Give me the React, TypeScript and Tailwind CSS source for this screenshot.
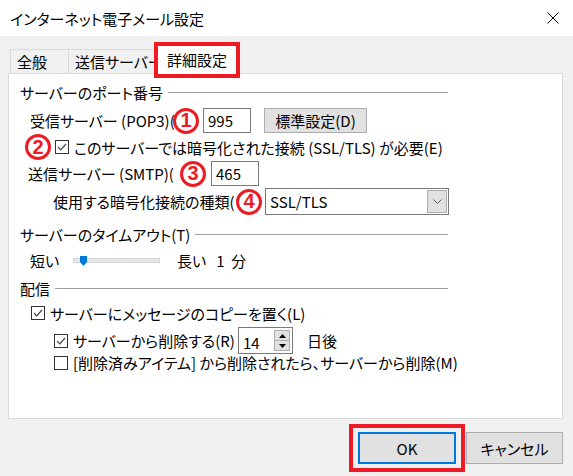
import React from "react";

const FONT = "font-['Noto_Sans_CJK_JP',sans-serif] [font-feature-settings:'palt']";

function Circled({ n }: { n: string }) {
  return (
    <span className="relative z-10 flex h-[26px] w-[26px] shrink-0 items-center justify-center rounded-full border-[3px] border-[#ed1c24] bg-white pb-[1px] font-['Liberation_Sans',sans-serif] text-[20px] font-bold leading-none text-[#ed1c24]">
      {n}
    </span>
  );
}

function Check({ checked }: { checked: boolean }) {
  return (
    <span className="flex h-[14px] w-[14px] shrink-0 items-center justify-center border border-[#333] bg-white">
      {checked && (
        <svg width="10" height="8" viewBox="0 0 10 8">
          <path d="M1 4 L3.8 6.8 L9 1" fill="none" stroke="#444" strokeWidth="1.2" />
        </svg>
      )}
    </span>
  );
}

function Section({ label }: { label: string }) {
  return (
    <div className="ml-[11px] flex h-[20px] w-[428px] items-center">
      <span className="whitespace-nowrap pr-[5px]">{label}</span>
      <span className="h-px flex-1 bg-[#a0a0a0]" />
    </div>
  );
}

export default function App() {
  return (
    <div className={`h-[476px] w-[573px] overflow-hidden bg-[#f0f0f0] text-[15px] leading-none text-black ${FONT}`}>
      {/* title bar */}
      <div className="flex h-[36px] items-center justify-between bg-white pl-[10px] pr-[14px]">
        <span className="text-[15px]">インターネット電子メール設定</span>
        <svg width="12" height="12" viewBox="0 0 12 12">
          <path d="M0.5 0.5 L11.5 11.5 M11.5 0.5 L0.5 11.5" stroke="#000" strokeWidth="1" />
        </svg>
      </div>

      {/* tabs */}
      <div className="mt-[6px] flex items-end pl-[10px]">
        <div className="flex h-[24px] w-[59px] items-center border border-b-0 border-[#d9d9d9] pl-[6px]">全般</div>
        <div className="flex h-[24px] w-[89px] items-center whitespace-nowrap border border-b-0 border-l-0 border-[#d9d9d9] pl-[6px]">
          送信サーバー
        </div>
        <div className="relative z-10 -mb-[5px] -ml-[4px] h-[36px] w-[86px] border-4 border-[#ed1c24] bg-white">
          <div className="flex h-full items-center justify-center pb-[2px]">詳細設定</div>
        </div>
      </div>

      {/* panel */}
      <div className="ml-[8px] flex h-[346px] w-[555px] flex-col border border-[#d9d9d9] bg-white">
        <div className="mt-[8px]">
          <Section label="サーバーのポート番号" />
        </div>

        <div className="mt-[5px] flex h-[27px] items-center">
          <span className="ml-[21px] w-[143px] whitespace-nowrap">受信サーバー (POP3)(</span>
          <Circled n="1" />
          <div className="ml-[4px] flex h-[25px] w-[48px] items-center border border-[#7a7a7a] pl-[4px]">995</div>
          <button className="ml-[13px] flex h-[25px] w-[103px] items-center justify-center border border-[#adadad] bg-[#e1e1e1]">
            標準設定(D)
          </button>
        </div>

        <div className="flex h-[26px] items-center">
          <span className="ml-[16px]">
            <Circled n="2" />
          </span>
          <span className="ml-[4px]">
            <Check checked />
          </span>
          <span className="ml-[5px] whitespace-nowrap">このサーバーでは暗号化された接続 (SSL/TLS) が必要(E)</span>
        </div>

        <div className="flex h-[27px] items-center">
          <span className="ml-[19px] w-[152px] whitespace-nowrap">送信サーバー (SMTP)(</span>
          <Circled n="3" />
          <div className="ml-[5px] flex h-[25px] w-[48px] items-center border border-[#7a7a7a] pl-[4px]">465</div>
        </div>

        <div className="flex h-[29px] items-center">
          <span className="ml-[44px] w-[183px] whitespace-nowrap">使用する暗号化接続の種類(</span>
          <Circled n="4" />
          <div className="ml-[3px] flex h-[27px] w-[184px] items-center justify-between border border-[#7a7a7a] pl-[4px] pr-[1px]">
            <span>SSL/TLS</span>
            <span className="flex h-[23px] w-[20px] items-center justify-center border border-[#adadad] bg-[#e1e1e1]">
              <svg width="9" height="5" viewBox="0 0 9 5">
                <path d="M0.5 0.5 L4.5 4.5 L8.5 0.5" fill="none" stroke="#555" strokeWidth="1" />
              </svg>
            </span>
          </div>
        </div>

        <div className="mt-[8px]">
          <Section label="サーバーのタイムアウト(T)" />
        </div>

        <div className="mt-[6px] flex h-[20px] items-center">
          <span className="ml-[21px] w-[43px]">短い</span>
          <div className="relative h-[5px] w-[87px] border border-[#d6d6d6] bg-[#e7e7e7]">
            <svg className="absolute -top-[3px] left-[6px]" width="7" height="10" viewBox="0 0 7 10">
              <path d="M0 0 H7 V6 L3.5 10 L0 6 Z" fill="#0078d7" />
            </svg>
          </div>
          <span className="ml-[17px]">長い</span>
          <span className="ml-[10px]">1&nbsp;&nbsp;分</span>
        </div>

        <div className="mt-[8px]">
          <Section label="配信" />
        </div>

        <div className="mt-[5px] flex h-[20px] items-center">
          <span className="ml-[22px]">
            <Check checked />
          </span>
          <span className="ml-[5px] whitespace-nowrap">サーバーにメッセージのコピーを置く(L)</span>
        </div>

        <div className="mt-[4px] flex h-[27px] items-center">
          <span className="ml-[45px]">
            <Check checked />
          </span>
          <span className="ml-[5px] w-[165px] whitespace-nowrap">サーバーから削除する(R)</span>
          <div className="flex h-[27px] w-[55px] items-center justify-between border border-[#7a7a7a] pl-[4px] pr-[2px]">
            <span className="pt-[3px]">14</span>
            <span className="flex h-[21px] w-[16px] flex-col border border-[#adadad] bg-[#e1e1e1]">
              <span className="flex flex-1 items-center justify-center border-b border-[#adadad]">
                <svg width="7" height="4" viewBox="0 0 7 4">
                  <path d="M0 4 L3.5 0 L7 4 Z" fill="#000" />
                </svg>
              </span>
              <span className="flex flex-1 items-center justify-center">
                <svg width="7" height="4" viewBox="0 0 7 4">
                  <path d="M0 0 L3.5 4 L7 0 Z" fill="#000" />
                </svg>
              </span>
            </span>
          </div>
          <span className="ml-[14px]">日後</span>
        </div>

        <div className="flex h-[17px] items-center">
          <span className="ml-[45px]">
            <Check checked={false} />
          </span>
          <span className="ml-[5px] whitespace-nowrap">[削除済みアイテム] から削除されたら、サーバーから削除(M)</span>
        </div>
      </div>

      {/* buttons */}
      <div className="mt-[5px] flex justify-end pr-[10px]">
        <div className="border-4 border-[#ed1c24] px-[5px] py-[4px]">
          <button className="flex h-[32px] w-[98px] items-center justify-center border-2 border-[#0078d7] bg-[#e1e1e1]">
            OK
          </button>
        </div>
        <button className="ml-[1px] mt-[8px] flex h-[32px] w-[97px] items-center justify-center border border-[#adadad] bg-[#e1e1e1]">
          キャンセル
        </button>
      </div>
    </div>
  );
}
